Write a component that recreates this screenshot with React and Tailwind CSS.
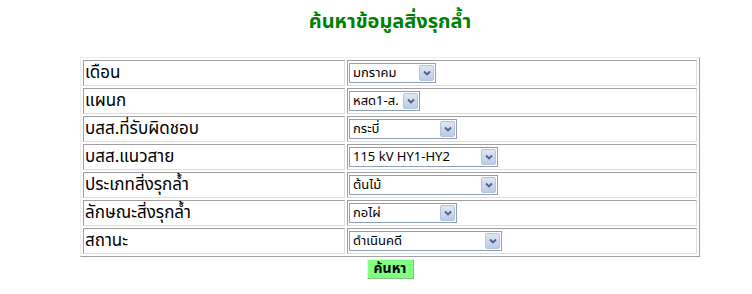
import React from "react";

const rows = [
  { label: "เดือน", value: "มกราคม", width: 87 },
  { label: "แผนก", value: "หสด1-ส.", width: 71 },
  { label: "บสส.ที่รับผิดชอบ", value: "กระบี่", width: 108 },
  { label: "บสส.แนวสาย", value: "115 kV HY1-HY2", width: 149 },
  { label: "ประเภทสิ่งรุกล้ำ", value: "ต้นไม้", width: 149 },
  { label: "ลักษณะสิ่งรุกล้ำ", value: "กอไผ่", width: 108 },
  { label: "สถานะ", value: "ดำเนินคดี", width: 153 },
];

// XP style dropdown look
const Combo = ({ value, width }) => (
  <div
    className="h-[20px] flex items-stretch border border-[#8e9fb5] bg-white"
    style={{ width }}
  >
    <div className="flex-1 pl-[3px] text-[13px] leading-[18px] font-normal text-black whitespace-nowrap overflow-hidden">
      {value}
    </div>
    <div className="w-[15px] m-[1px] rounded-[2px] border border-[#b5c3de] bg-gradient-to-b from-[#dfe6f5] to-[#bccbe8] flex items-center justify-center">
      <svg width="8" height="6" viewBox="0 0 8 6">
        <path d="M1 1.5 L4 4.5 L7 1.5" fill="none" stroke="#4d6185" strokeWidth="1.8" />
      </svg>
    </div>
  </div>
);

const App = () => {
  return (
    <div className="w-[752px] h-[294px] bg-white font-['Tahoma','Noto_Sans_Thai','Loma','Garuda','Liberation_Sans',sans-serif]">
      <div className="ml-[80px] w-[620px] flex flex-col items-center">
        <h1 className="mt-[10px] text-[20px] leading-[24px] font-bold text-[#008000]">
          ค้นหาข้อมูลสิ่งรุกล้ำ
        </h1>
        <table className="mt-[23px] w-[620px] border-separate border-spacing-[2px] border border-t-[#ececec] border-l-[#ececec] border-r-[#a0a0a0] border-b-[#a0a0a0]">
          <tbody>
            {rows.map((row) => (
              <tr key={row.label}>
                <td className="w-[262px] h-[26px] p-0 pl-[1px] align-middle border border-t-[#a0a0a0] border-l-[#a0a0a0] border-r-[#dcdcdc] border-b-[#dcdcdc] text-[17px] leading-[20px] text-black whitespace-nowrap">
                  {row.label}
                </td>
                <td className="h-[26px] p-0 pl-[1px] align-middle border border-t-[#a0a0a0] border-l-[#a0a0a0] border-r-[#dcdcdc] border-b-[#dcdcdc]">
                  <Combo value={row.value} width={row.width} />
                </td>
              </tr>
            ))}
          </tbody>
        </table>
        <button className="mt-[2px] w-[47px] h-[20px] bg-[#80ff80] border border-t-[#d8ffd8] border-l-[#d8ffd8] border-r-[#7fbf7f] border-b-[#7fbf7f] text-[14px] font-bold text-black leading-[18px]">
          ค้นหา
        </button>
      </div>
    </div>
  );
};

export default App;
